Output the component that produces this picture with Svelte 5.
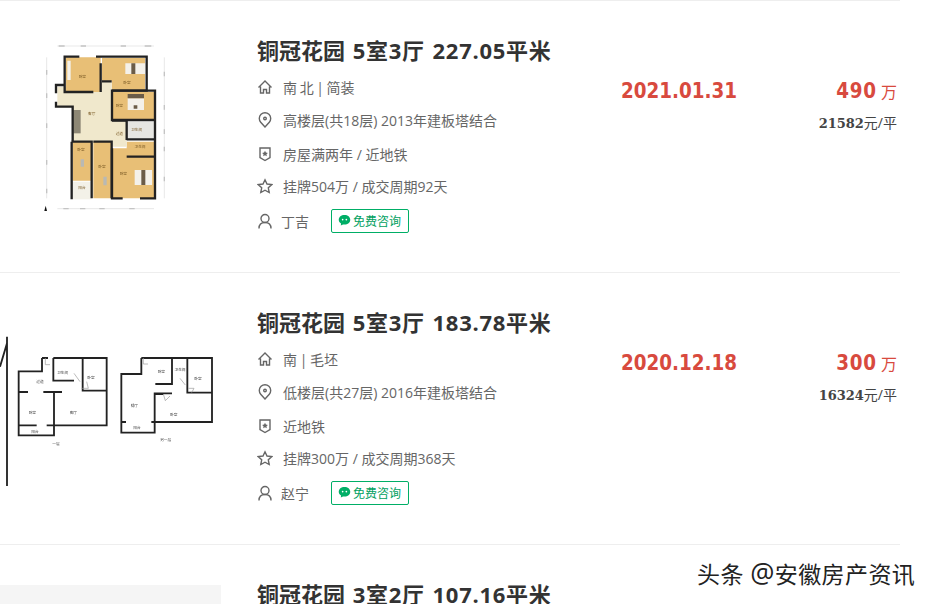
<script>
  const houses = [
    {
      name: '铜冠花园',
      spec: '5室3厅 227.05平米',
      plan: 'a',
      face: '南 北 | 简装',
      floor: '高楼层(共18层) 2013年建板塔结合',
      tags: '房屋满两年 / 近地铁',
      listed: '挂牌504万 / 成交周期92天',
      agent: '丁吉',
      date: '2021.01.31',
      price: '490',
      unit: '21582'
    },
    {
      name: '铜冠花园',
      spec: '5室3厅 183.78平米',
      plan: 'b',
      face: '南 | 毛坯',
      floor: '低楼层(共27层) 2016年建板塔结合',
      tags: '近地铁',
      listed: '挂牌300万 / 成交周期368天',
      agent: '赵宁',
      date: '2020.12.18',
      price: '300',
      unit: '16324'
    },
    // only the top of this one is on screen
    { name: '铜冠花园', spec: '3室2厅 107.16平米', plan: 'c' }
  ];

  const labelsB = [
    ['卫生间', 188, 161], ['过道', 120, 189], ['卧室', 273, 178], ['卧室', 97, 282],
    ['客厅', 220, 282], ['阳台', 105, 338], ['一层', 168, 374], ['卧室', 484, 159],
    ['卫生间', 540, 152], ['卧室', 594, 179], ['餐厅', 403, 262], ['阳台', 411, 328],
    ['卧室', 521, 288], ['另一层', 497, 362]
  ];
  const labelsA = [
    ['卧室', 157, 144], ['卧室', 291, 161], ['卧室', 268, 230], ['客厅', 185, 254],
    ['过道', 268, 316], ['卫生间', 320, 304], ['卫生间', 330, 354], ['卧室', 153, 364],
    ['卧室', 216, 414], ['卧室', 280, 436], ['阳台', 156, 478]
  ];
</script>

<div class="page">
  <ul class="list">
    {#each houses as h}
      <li class="item">
        <div class="pic">
          {#if h.plan === 'a'}
            <svg class="plan-a" width="200" height="190" viewBox="0 0 600 570">
              <g class="dim">
                <path d="M82 48H372M50 82V505M403 82V505M82 536H372" />
              </g>
              <g class="dim-marks">
                <path d="M86 48H104M152 48H168M272 48H288M344 48H364M50 120V134M50 190V204M50 280V294M50 390V404M50 476V490M403 125V139M403 225V239M403 298V312M403 350V364M403 440V454M100 536H116M150 536H166M208 536H224M298 536H314" />
              </g>
              <path fill="#e8bf76" d="M108 82H212V186H108ZM216 84H345V182H245V152H216ZM246 186H372V270H246ZM128 335H185V452H128ZM190 335H245V505H190ZM248 355H290V380H372V505H248ZM290 335H372V380H290Z" />
              <path fill="#f0e8cc" d="M82 170H108V186H212V155H245V270H290V350H248V335H128V232H82Z" />
              <path fill="#e6e6e2" d="M290 275H372V328H290Z" />
              <path fill="#f3f1e8" d="M128 455H185V508H128Z" />
              <path fill="#8d8775" d="M130 240H152V310H130Z" />
              <path fill="#f4f1ea" d="M286 100H345V132H286ZM293 205H342V240H293ZM314 420H366V465H314ZM112 92H122V150H112Z" />
              <path fill="#6b5c48" d="M304 100H316V132H304ZM293 192H342V205H293ZM334 420H346V465H334ZM311 226H322V236H311Z" />
              <path fill="#b9b9b4" d="M152 388H162V410H152ZM220 440H230V466H220Z" />
              <g class="tiny brown">
                {#each labelsA as [t, x, y]}
                  <text {x} {y}>{t}</text>
                {/each}
              </g>
              <g class="wall">
                <path d="M148 80H104V186H190" />
                <path d="M198 80H350V182H246V270H372" />
                <path d="M212 100V186M216 154H245" />
                <path d="M104 165H78V190M78 215V230H128V335" />
                <path d="M246 182H375V505H330M278 505H246V355" />
                <path d="M246 272H290V330M290 328H372M290 380H372" />
                <path d="M125 335H185V505M125 335V508M190 335H245V505" />
              </g>
              <path fill="#111" d="M47 527L51 543H43Z" />
            </svg>
          {:else if h.plan === 'b'}
            <svg class="plan-b" width="230" height="180" viewBox="0 0 690 540">
              <g class="wall thin">
                <path d="M21 50V498M21 70L0 140" />
                <path d="M126 114V154H56V346H162V218M126 114H144M160 114H320V316H160M160 114V182H222M248 114V212H318M56 216H84M130 216H186M56 316H110M140 316H320" />
                <path d="M424 114V162H364V338H464V220H516M424 114H636V306H454M516 114V192H466M562 114V218H636M364 306H378M464 222H490" />
              </g>
              <g class="door">
                <path d="M136 114V134H150M222 160L240 185M245 205H265L260 185M430 114V132H444M540 175L556 195M565 205H582L575 218M490 222L496 242L510 228" />
              </g>
              <g class="tiny">
                {#each labelsB as [t, x, y]}
                  <text {x} {y}>{t}</text>
                {/each}
              </g>
            </svg>
          {:else}
            <div class="plan-c"></div>
          {/if}
        </div>

        <div class="info">
          <h3 class="title">{h.name} <span class="spec">{h.spec}</span></h3>
          {#if h.face}
            <p class="line face">
              <svg class="ico" viewBox="0 0 16 16"><path d="M1.500 8.500L8 2l6.500 6.500M3.500 7.500V14H6.500V10.500H9.500V14H12.500V7.500" /></svg>
              <span>{h.face}</span>
            </p>
            <p class="line">
              <svg class="ico" viewBox="0 0 16 16"><path d="M8 15L3.700 10.200A5.700 5.700 0 1 1 12.300 10.200Z" /><circle cx="8" cy="6.500" r="1.300" /></svg>
              <span>{h.floor}</span>
            </p>
            <p class="line">
              <svg class="ico" viewBox="0 0 16 16"><path d="M3 2H13V11.500L8 14.500L3 11.500Z" /><path class="fill" d="M8 4.800l.9 1.800 2 .3-1.450 1.400.35 2L8 9.350 6.200 10.300l.35-2L5.100 6.900l2-.3Z" /></svg>
              <span>{h.tags}</span>
            </p>
            <p class="line">
              <svg class="ico" viewBox="0 0 16 16"><path d="M8 1.800L10 6L14.800 6.600L11.300 9.800L12.200 14.500L8 12.200L3.800 14.500L4.700 9.800L1.200 6.600L6 6Z" /></svg>
              <span>{h.listed}</span>
            </p>
            <p class="line agent">
              <svg class="ico" viewBox="0 0 16 16"><circle cx="8" cy="5.500" r="4" /><path d="M2 15.500C2 11.500 4.500 9.500 8 9.500S14 11.500 14 15.500" /></svg>
              <span class="name">{h.agent}</span>
              <span class="chat">
                <svg class="bubble" viewBox="0 0 14 14"><path d="M7 1C3.400 1 .8 3.200 .8 6.200C.8 8 1.800 9.400 3.300 10.300L3 12.500L5.400 11.200C5.900 11.300 6.400 11.400 7 11.400C10.600 11.400 13.200 9.200 13.200 6.200S10.600 1 7 1Z" /><circle class="eye" cx="5" cy="6" r=".9" /><circle class="eye" cx="9" cy="6" r=".9" /></svg>
                免费咨询
              </span>
            </p>
          {/if}
        </div>

        {#if h.date}
          <div class="date">{h.date}</div>
          <div class="money">
            <div class="price"><b>{h.price}</b> 万</div>
            <div class="unit"><b>{h.unit}</b>元/平</div>
          </div>
        {/if}
      </li>
    {/each}
  </ul>

  <div class="mark">头条 <span class="at">@</span>安徽房产资讯</div>
</div>

<style>
  :global(body) {
    background: #fff;
    font-family: "Open Sans", "Noto Sans CJK SC", sans-serif;
  }
  .page {
    height: 604px;
    overflow: hidden;
    position: relative;
  }
  .list {
    list-style: none;
    margin: 0;
    padding: 0;
    width: 900px;
    border-top: 1px solid #eee;
  }
  .item {
    display: flex;
    height: 271px;
    border-bottom: 1px solid #eee;
  }
  .pic {
    flex: none;
    width: 221px;
    margin-right: 36px;
  }
  .plan-a {
    display: block;
    margin: 29px 0 0 30px;
    filter: blur(0.6px);
  }
  .plan-b {
    display: block;
    margin-top: 47px;
    filter: blur(0.6px);
  }
  .plan-c {
    height: 190px;
    margin-top: 40px;
    background: #f5f5f5;
  }
  .dim path {
    fill: none;
    stroke: #d0d0d0;
    stroke-width: 1.500;
  }
  .dim-marks path {
    fill: none;
    stroke: #c4c4c4;
    stroke-width: 4;
  }
  .wall path {
    fill: none;
    stroke: #222;
    stroke-width: 7;
  }
  .wall.thin path {
    stroke-width: 5.500;
  }
  .door path {
    fill: none;
    stroke: #999;
    stroke-width: 2;
  }
  .tiny text {
    font-size: 11px;
    fill: #444;
    text-anchor: middle;
  }
  .tiny.brown text {
    fill: #7a5a25;
  }
  .info {
    flex: none;
    width: 364px;
    padding-top: 34px;
  }
  .title {
    margin: 0 0 5px;
    font-size: 22px;
    line-height: 30px;
    font-weight: 700;
    color: #333;
    white-space: nowrap;
  }
  .spec {
    margin-left: 2px;
    letter-spacing: 0.700px;
    word-spacing: 1.500px;
  }
  .line {
    display: flex;
    align-items: center;
    margin: 0;
    height: 33px;
    font-size: 14px;
    color: #666;
    white-space: nowrap;
  }
  .face {
    word-spacing: -1px;
  }
  .line:nth-of-type(3) {
    margin-top: 1px;
  }
  .line:nth-of-type(4) {
    margin-top: -1px;
  }
  .ico {
    flex: none;
    width: 16px;
    height: 16px;
    margin-right: 10px;
    fill: none;
    stroke: #666;
    stroke-width: 1.400;
  }
  .ico .fill {
    fill: #666;
    stroke: none;
  }
  .agent {
    margin-top: 2px;
  }
  .agent .ico {
    margin-right: 8px;
  }
  .name {
    width: 50px;
  }
  .chat {
    display: flex;
    align-items: center;
    gap: 2px;
    height: 22px;
    padding: 0 7px 0 6px;
    border: 1px solid #00ae66;
    border-radius: 2px;
    font-size: 12px;
    color: #00a060;
  }
  .bubble {
    width: 13px;
    height: 13px;
    fill: #00ae66;
  }
  .eye {
    fill: #fff;
  }
  .date {
    flex: none;
    padding-top: 76px;
    font-family: "DejaVu Sans", sans-serif;
    font-stretch: condensed;
    font-size: 20.400px;
    line-height: 28px;
    font-weight: 700;
    color: #d84a3e;
  }
  .money {
    flex: 1;
    padding: 76px 3px 0 0;
    text-align: right;
  }
  .price {
    font-size: 16px;
    line-height: 28px;
    color: #d84a3e;
  }
  .price b {
    font-family: "DejaVu Sans", sans-serif;
    font-stretch: condensed;
    font-size: 20.400px;
    letter-spacing: 0.800px;
  }
  .unit {
    margin-top: 7px;
    font-size: 14px;
    line-height: 20px;
    color: #444;
  }
  .unit b {
    font-family: "DejaVu Serif", serif;
    font-size: 13px;
  }
  .mark {
    position: absolute;
    left: 697px;
    top: 559px;
    font-size: 23px;
    line-height: 30px;
    letter-spacing: 0.400px;
    color: #222;
    text-shadow: 1px 1px 0 #fff, -1px -1px 0 #fff;
    white-space: nowrap;
  }
  .at {
    font-size: 27px;
    line-height: 20px;
  }
</style>
